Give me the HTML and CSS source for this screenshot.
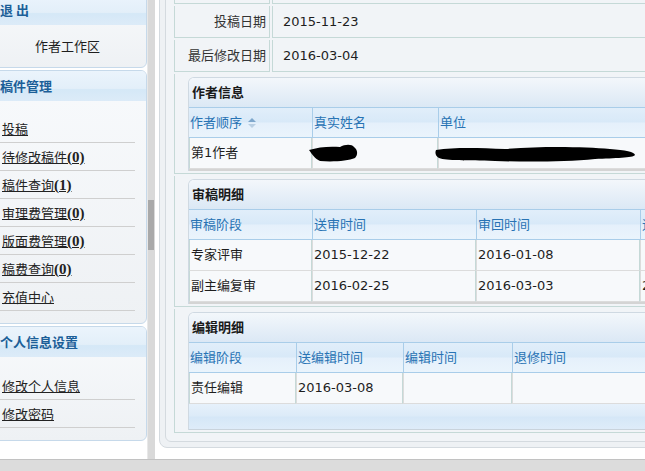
FILE: index.html
```html
<!DOCTYPE html>
<html lang="zh-CN">
<head>
    <meta charset="UTF-8">
    <title>作者工作区</title>
    <link rel="stylesheet" href="styles.css">
</head>
<body>

<div class="frames">
    <div class="side">
        <div class="box box-first">
            <div class="box-hd">退&nbsp;出</div>
            <div class="box-bd center">作者工作区</div>
        </div>

        <div class="box">
            <div class="box-hd">稿件管理</div>
            <ul class="menu">
                <li><a href="#">投稿</a></li>
                <li><a href="#">待修改稿件<span class="n">(0)</span></a></li>
                <li><a href="#">稿件查询<span class="n">(1)</span></a></li>
                <li><a href="#">审理费管理<span class="n">(0)</span></a></li>
                <li><a href="#">版面费管理<span class="n">(0)</span></a></li>
                <li><a href="#">稿费查询<span class="n">(0)</span></a></li>
                <li><a href="#">充值中心</a></li>
            </ul>
        </div>

        <div class="box">
            <div class="box-hd">个人信息设置</div>
            <ul class="menu menu-last">
                <li><a href="#">修改个人信息</a></li>
                <li><a href="#">修改密码</a></li>
            </ul>
        </div>
    </div>

    <div class="vscroll"><div class="thumb"></div></div>

    <div class="main">
        <div class="outer">
            <div class="inner">
                <table class="form">
                    <!-- scrolled out of view -->
                    <tr><td class="lbl">&nbsp;</td><td class="val">&nbsp;</td></tr>
                    <tr><td class="lbl">投稿日期</td><td class="val">2015-11-23</td></tr>
                    <tr><td class="lbl">最后修改日期</td><td class="val">2016-03-04</td></tr>

                    <!-- 作者信息 -->
                    <tr><td class="sub" colspan="2">
                        <div class="pnl">
                            <div class="pnl-hd">作者信息</div>
                            <table class="grid">
                                <tr>
                                    <th class="w123">作者顺序
                                        <svg class="sort" width="8" height="10" viewBox="0 0 8 10">
                                            <path d="M0 4 L4 0 L8 4 Z" fill="#7ea7cc"/>
                                            <path d="M0 6 L8 6 L4 10 Z" fill="#b9cfe3"/>
                                        </svg>
                                    </th>
                                    <th class="w126">真实姓名</th>
                                    <th>单位</th>
                                </tr>
                                <tr>
                                    <td>第1作者</td>
                                    <td>
                                        <svg class="ink ink1" width="50" height="19" viewBox="0 0 50 19">
                                            <path d="M1 6 C10 3 22 2 32 3 C37 0 44 0 46 3 C50 6 50 11 47 14 C40 17 25 18 12 17 C7 15 4 10 1 6 Z" fill="#000"/>
                                        </svg>
                                    </td>
                                    <td>
                                        <svg class="ink ink2" width="202" height="19" viewBox="0 0 202 19">
                                            <path d="M1 6 C20 3 45 4 70 5 C110 2 150 3 175 5 C190 6 200 8 200 11 C198 14 180 14 160 15 C130 18 90 18 60 17 C30 16 12 17 4 14 C0 12 0 8 1 6 Z" fill="#000"/>
                                        </svg>
                                    </td>
                                </tr>
                            </table>
                            <div class="pnl-end"></div>
                        </div>
                    </td></tr>

                    <!-- 审稿明细 -->
                    <tr><td class="sub" colspan="2">
                        <div class="pnl">
                            <div class="pnl-hd">审稿明细</div>
                            <table class="grid">
                                <tr>
                                    <th class="w123">审稿阶段</th>
                                    <th class="w164">送审时间</th>
                                    <th class="w164">审回时间</th>
                                    <th>退修时间</th>
                                </tr>
                                <tr>
                                    <td>专家评审</td>
                                    <td>2015-12-22</td>
                                    <td>2016-01-08</td>
                                    <td></td>
                                </tr>
                                <tr>
                                    <td>副主编复审</td>
                                    <td>2016-02-25</td>
                                    <td>2016-03-03</td>
                                    <td>2016-03-04</td>
                                </tr>
                            </table>
                            <div class="pnl-end"></div>
                        </div>
                    </td></tr>

                    <!-- 编辑明细 -->
                    <tr><td class="sub" colspan="2">
                        <div class="pnl">
                            <div class="pnl-hd">编辑明细</div>
                            <table class="grid">
                                <tr>
                                    <th class="w107">编辑阶段</th>
                                    <th class="w107">送编辑时间</th>
                                    <th class="w109">编辑时间</th>
                                    <th>退修时间</th>
                                </tr>
                                <tr>
                                    <td>责任编辑</td>
                                    <td>2016-03-08</td>
                                    <td></td>
                                    <td></td>
                                </tr>
                            </table>
                            <div class="pnl-ft"></div>
                        </div>
                    </td></tr>
                </table>
            </div>
        </div>
    </div>
</div>

<div class="hbar"></div>

</body>
</html>
```

FILE: styles.css
```css
body {
    margin: 0;
    width: 645px;
    height: 471px;
    overflow: hidden;
    background: #fff;
    font-family: "DejaVu Sans", "Noto Sans CJK SC", sans-serif;
    font-size: 13px;
    color: #1e1e1e;
}

.frames {
    display: flex;
    height: 459px;
}

/* ---- left frame ---- */
.side {
    width: 147px;
    flex: none;
    overflow: hidden;
    background: #fff;
    font-family: "Noto Sans CJK SC", sans-serif;
}

.box {
    box-sizing: border-box;
    width: 159px;
    margin: 0 0 2px -12px;
    border: 1px solid #c6d9ea;
    border-radius: 0 6px 6px 0;
    background: linear-gradient(#f8fafc, #eef1f4);
    overflow: hidden;
}

.box-first {
    margin-top: -6px;
}

.box-hd {
    height: 30px;
    line-height: 30px;
    padding-left: 11px;
    font-weight: bold;
    color: #1c5f98;
    background: linear-gradient(#ebf4fc 0%, #e3eff9 58%, #d5e8f7 62%, #dcebf8 100%);
}

.box-bd {
    height: 42px;
    line-height: 42px;
}

.center {
    text-align: center;
}

.menu {
    list-style: none;
    margin: 0;
    padding: 14px 11px 12px 0;
}

.menu-last {
    padding-top: 15px;
}

.menu li {
    height: 27px;
    line-height: 27px;
    padding-left: 13px;
    border-bottom: 1px solid #cfcfcf;
}

.menu a {
    color: #222;
    text-decoration: underline;
}

.menu .n {
    font-family: "Liberation Serif", serif;
    font-weight: bold;
    font-size: 15px;
}

.vscroll {
    box-sizing: border-box;
    width: 8px;
    flex: none;
    background: #d9d9d9;
    border-left: 1px solid #e8e8e8;
}

.thumb {
    width: 6px;
    height: 50px;
    margin-top: 200px;
    background: #a9a9a9;
}

/* ---- right frame ---- */
.main {
    flex: 1;
    min-width: 0;
    overflow: hidden;
    background: #fff;
}

.outer {
    width: 620px;
    margin: -43px 0 0 4px;
    padding: 5px;
    border: 1px solid #d4dadf;
    border-radius: 8px;
    background: #eef1f4;
}

.inner {
    padding: 6px;
    border: 1px solid #d4dadf;
    border-radius: 6px;
    background: #f1f4f7;
}

.form {
    width: 100%;
    border-collapse: separate;
    border-spacing: 2px;
    table-layout: fixed;
}

.form td {
    border: 1px solid #c5d9d7;
    border-top: 0;
    padding: 0;
    line-height: 31px;
    white-space: nowrap;
}

.form .lbl {
    box-sizing: border-box;
    width: 96px;
    padding-right: 3px;
    text-align: right;
    color: #333;
}

.form .val {
    padding-left: 10px;
}

.form .sub {
    padding: 3px 0 2px 13px;
    line-height: normal;
}

.pnl {
    border: 1px solid #cfd9e2;
    border-bottom: 0;
    border-radius: 6px 0 0 0;
    background: #f7f9fb;
    overflow: hidden;
}

.pnl-hd {
    height: 29px;
    line-height: 29px;
    padding-left: 3px;
    font-weight: bold;
    color: #1a1a1a;
    background: linear-gradient(#f3f7fb, #dbe8f5);
}

.grid {
    width: 100%;
    border-collapse: separate;
    border-spacing: 0;
    table-layout: fixed;
}

.grid th,
.grid td {
    box-sizing: border-box;
    padding: 0 0 0 1px;
    text-align: left;
    white-space: nowrap;
}

.grid th {
    height: 31px;
    line-height: 29px;
    font-weight: normal;
    color: #2873b4;
    border-top: 1px solid #a9cde9;
    border-bottom: 1px solid #a9cde9;
    background: linear-gradient(#e1eefa 0%, #d8e9f8 48%, #e5f0fb 52%, #eaf4fc 100%);
}

.grid th + th {
    border-left: 1px solid #a9cde9;
}

.grid td {
    height: 31px;
    line-height: 30px;
    border-bottom: 1px solid #dcdcdc;
}

.grid td + td {
    border-left: 1px solid #dcdcdc;
}

.w107 { width: 107px; }
.w109 { width: 109px; }
.w123 { width: 123px; }
.w126 { width: 126px; }
.w164 { width: 164px; }

.sort {
    vertical-align: -1px;
    margin-left: 2px;
}

.ink {
    vertical-align: middle;
}

.ink1 {
    margin-left: -6px;
}

.ink2 {
    margin-left: -5px;
}

.pnl-end {
    height: 2px;
    background: #d4d4d4;
}

.pnl-ft {
    height: 25px;
    border-bottom: 1px solid #c9d3dc;
    background: linear-gradient(#e6f1fb 0%, #dcebf8 48%, #d5e7f7 52%, #deecf9 100%);
}

.hbar {
    box-sizing: border-box;
    height: 12px;
    border-top: 1px solid #c2c2c2;
    background: #dcdcdc;
}
```
